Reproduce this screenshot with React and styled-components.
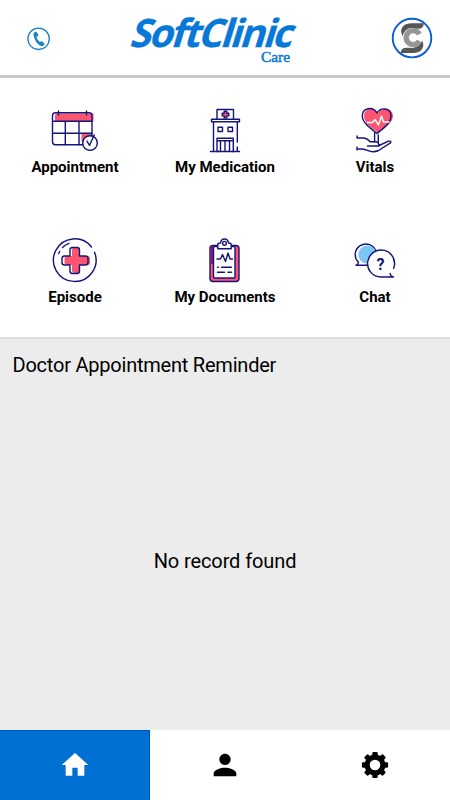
import styled, { createGlobalStyle } from "styled-components";
import { MdHome, MdPerson } from "react-icons/md";

const GlobalStyle = createGlobalStyle`
  * {
    box-sizing: border-box;
  }

  body {
    margin: 0;
    background: #fff;
    color: #000;
    font-family: Roboto, sans-serif;
  }
`;

const Screen = styled.div`
  height: 100vh;
  min-height: 800px;
  display: flex;
  flex-direction: column;
`;

const Header = styled.header`
  height: 78px;
  flex: none;
  display: grid;
  grid-template-columns: 100px 1fr 60px;
  padding-left: 20px;
  border-bottom: 3px solid #c8c8c8;

  svg {
    display: block;
  }
`;

const Menu = styled.nav`
  height: 261px;
  flex: none;
  display: grid;
  grid-template-columns: repeat(3, 1fr);
  grid-auto-rows: 130px;
  border-bottom: 2px solid #dedede;
`;

const MenuItem = styled.a`
  display: flex;
  flex-direction: column;
  align-items: center;
  padding-top: 27px;
  font-size: 15px;
  font-weight: 700;
  line-height: 25px;

  svg {
    display: block;
    width: 50px;
    height: 50px;
    fill: none;
    stroke: #14147d;
    stroke-width: 1.4;
    stroke-linecap: round;
    stroke-linejoin: round;
  }
`;

const Reminders = styled.main`
  flex: 1;
  display: flex;
  flex-direction: column;
  background: #ececec;

  h2 {
    margin: 0;
    padding: 13px 12.5px 0;
    font-size: 20px;
    font-weight: 400;
    line-height: 26px;
    letter-spacing: -0.22px;
  }

  p {
    flex: 1;
    display: flex;
    align-items: center;
    justify-content: center;
    margin: 0;
    padding-top: 14px;
    font-size: 20px;
    letter-spacing: -0.1px;
  }
`;

const TabBar = styled.footer`
  height: 70px;
  flex: none;
  display: grid;
  grid-template-columns: repeat(3, 1fr);
`;

const Tab = styled.a`
  display: flex;
  align-items: center;
  justify-content: center;
  color: ${({ $active }) => ($active ? "#fff" : "#000")};
  background: ${({ $active }) => ($active ? "#0070d2" : "#fff")};
  box-shadow: ${({ $active }) => ($active ? "inset -1px 1px #0052cc" : "none")};
`;

const red = "#fb5570";

const PhoneIcon = () => (
  <svg width="40" height="70" viewBox="20 0 40 70">
    <circle cx="38.6" cy="38.8" r="10.7" fill="none" stroke="#1c80c4" strokeWidth="1.3" />
    <path
      d="M33.4 33.6l2-2 1 .5 2 2.7-.2 1-1.7 1.3q.7 3 3.3 4.9l1.6-.8 1 .2 2 2.3v.9l-1.6 1.5q-2.6.3-5.1-2.4-3.8-3.8-4.3-10.1z"
      fill="#1c80c4"
    />
  </svg>
);

const Logo = () => (
  <svg width="190" height="75" viewBox="120 0 190 75" fill="#0878d8">
    <text
      transform="translate(128.8 46.8) skewX(-17) scale(0.985 1)"
      fontFamily="Open Sans"
      fontSize="39"
      fontWeight="700"
      letterSpacing="-2.1"
      stroke="#0878d8"
      strokeWidth="0.3"
    >
      SoftClinic
    </text>
    <text
      x="261"
      y="61.5"
      fontFamily="Liberation Serif"
      fontSize="15.5"
      textLength="29"
      lengthAdjust="spacingAndGlyphs"
      stroke="#0878d8"
      strokeWidth="0.5"
    >
      Care
    </text>
  </svg>
);

const Avatar = () => (
  <svg width="50" height="70" viewBox="390 0 50 70" fill="none">
    <path
      d="M424 23.3h-13c-6 0-9.8 3.6-9.8 8 0 3.8 2 6 5 8.5l5-11h7.5q4.5 0 5.3-5.5z"
      fill="#565656"
    />
    <path
      d="M400.5 53h13c6 0 9.8-3.6 9.8-8 0-3.5-1.5-5.5-4.5-7.5l-5 10.2h-7.5q-5 0-5.8 5.3z"
      fill="#565656"
    />
    <circle cx="412.5" cy="37.7" r="10" fill="#fff" />
    <path d="M419.3 34.2a7 7 0 1 0 0 6.8" stroke="#969696" strokeWidth="5.4" />
    <circle cx="412" cy="38.1" r="19.3" stroke="#0a5cd6" strokeWidth="1.9" />
  </svg>
);

const AppointmentIcon = () => (
  <svg viewBox="50 105 50 50">
    <path d="M55 121v-5q0-2.5 2.5-2.5h36V121zM81.5 133.5H92v8H81.5z" fill={red} stroke="none" />
    <rect x="52.5" y="112.7" width="39.5" height="32" rx="3" />
    <path d="M52.5 121.2H92M52.5 133.2H92M65.3 121.2v23.5M79 121.2v23.5M58.5 111v4M86.5 111v4" />
    <circle cx="90" cy="143" r="7.3" fill="#fff" />
    <path d="M87 141l2.5 4.5 4.7-10.5" />
  </svg>
);

const MedicationIcon = () => (
  <svg viewBox="200 105 50 50">
    <path d="M217 119v-9.5h16.5v9.5M211.5 119.2h28v2.6h-28zM213.5 122v29.5M237.3 122v20M237.3 147v4.5M210.5 151.5h8M232 151.5h7.5" />
    <path d="M218 127.2h4.5v4.3H218zM228 127.2h4.5v4.3H228z" />
    <path d="M217 151.5v-13.2h16.3v13.2M217 140.8h16.3M220.5 141v10.5M225 141v10.5M229.5 141v10.5M217 151.5h16" />
    <path d="M224.2 111.3h2.6v2h2v2.6h-2v2h-2.6v-2h-2v-2.6h2z" fill={red} />
  </svg>
);

const VitalsIcon = () => (
  <svg viewBox="350 105 50 50">
    <path
      d="M378 133c-6-5-14-10-14-17 0-8 10-10 14-3 4-7 15-5 15 3 0 7-9 12-15 17z"
      fill={red}
      stroke="none"
    />
    <path d="M377 133.5c-6-5-14.7-10.5-14.7-17.5 0-8.5 10.7-10 14.7-3 4-6.5 14-5 14 3 0 7-8 12.5-14 17.5z" />
    <path d="M367.5 122.5h5l2.5-3 3.5 5.5 3-9 2 6h5.5" stroke="#fff" />
    <path d="M374.6 132.5v9.5M378.3 135v7.5" />
    <path d="M357 136v2h6q4 0 7 3.8h6q3 .5 3 4.2h-11.5M379 145.5l9-4.2q4-.8 2.5 1.6l-12 7.6q-3 1.5-7 1.1l-8.5-2.6h-6M357 147v3" />
  </svg>
);

const EpisodeIcon = () => (
  <svg viewBox="50 235 50 50">
    <path
      d="M72 250q0-2.5 2.5-2.5h3q2.5 0 2.5 2.5v6h7.5q2.5 0 2.5 2.5v4q0 2.5-2.5 2.5H80v5.5q0 2.5-2.5 2.5h-3q-2.5 0-2.5-2.5V265h-5q-2.5 0-2.5-2.5v-4q0-2.5 2.5-2.5h5z"
      fill={red}
      stroke="none"
    />
    <path d="M70 250q0-2.5 2.5-2.5h4.5q2.5 0 2.5 2.5v6h6q2.5 0 2.5 2.5v4q0 2.5-2.5 2.5h-6v6q0 2.5-2.5 2.5h-4.5q-2.5 0-2.5-2.5v-6h-5.5q-2.5 0-2.5-2.5v-4q0-2.5 2.5-2.5H70z" />
    <path d="M91.5 247a21.3 21.3 0 1 0 3 5.2" />
    <path d="M62.5 247.5q3-3 6.5-4.2M58.7 253.5l1-2" />
  </svg>
);

const DocumentsIcon = () => (
  <svg viewBox="200 235 50 50">
    <rect x="210" y="245.5" width="29" height="36" rx="3" fill={red} />
    <path d="M210.5 248v16h3v-18h-1q-2 0-2 2z" fill="#8f187c" stroke="none" />
    <rect x="213.5" y="246.5" width="21.5" height="31.5" rx="1" fill="#fff" />
    <path d="M217.8 248.7v-4.2q0-1.5 2.7-1.5 .5-4 4-4t4 4q2.7 0 2.7 1.5v4.2z" fill="#fff" />
    <circle cx="224.5" cy="243.3" r="1.9" />
    <path d="M217 259h3.5l2-4.5 3 7 2.5-8.5 2 6h2.5M217.5 267.2h.8M221.5 267.2h10M217.5 272.3h7M228 272.3h3.5" />
  </svg>
);

const ChatIcon = () => (
  <svg viewBox="350 235 50 50">
    <path d="M358.5 262.3a10.6 10.6 0 1 1 7.5 2.9h-10q2-.6 2.5-2.9z" fill="#fff" />
    <circle cx="367.3" cy="254.6" r="9" fill="#7bc5f3" stroke="none" />
    <path d="M393.6 268.5a13.5 13.5 0 1 0-12.6 8.5h12.5q-3-.5-3.3-3.5M394.6 265q.1-3-1.1-5.8" fill="#fff" />
    <text x="380.5" y="269.5" textAnchor="middle" fontSize="16" fontWeight="700" fill="#14147d" stroke="none">
      ?
    </text>
  </svg>
);

const GearIcon = () => (
  <svg width="28" height="28" viewBox="-14 -14 28 28" stroke="#000" fill="none">
    <circle r="7.9" strokeWidth="5.2" />
    {[0, 45, 90, 135, 180, 225, 270, 315].map((angle) => (
      <rect
        key={angle}
        x="-2.7"
        y="-13.1"
        width="5.4"
        height="5"
        rx="1.3"
        fill="#000"
        stroke="none"
        transform={`rotate(${angle})`}
      />
    ))}
  </svg>
);

const items = [
  { label: "Appointment", icon: <AppointmentIcon /> },
  { label: "My Medication", icon: <MedicationIcon /> },
  { label: "Vitals", icon: <VitalsIcon /> },
  { label: "Episode", icon: <EpisodeIcon /> },
  { label: "My Documents", icon: <DocumentsIcon /> },
  { label: "Chat", icon: <ChatIcon /> },
];

export default function App() {
  return (
    <Screen>
      <GlobalStyle />
      <Header>
        <PhoneIcon />
        <Logo />
        <Avatar />
      </Header>
      <Menu>
        {items.map(({ label, icon }) => (
          <MenuItem key={label}>
            {icon}
            {label}
          </MenuItem>
        ))}
      </Menu>
      <Reminders>
        <h2>Doctor Appointment Reminder</h2>
        <p>No record found</p>
      </Reminders>
      <TabBar>
        <Tab $active>
          <MdHome size={32} />
        </Tab>
        <Tab>
          <MdPerson size={34} />
        </Tab>
        <Tab>
          <GearIcon />
        </Tab>
      </TabBar>
    </Screen>
  );
}
